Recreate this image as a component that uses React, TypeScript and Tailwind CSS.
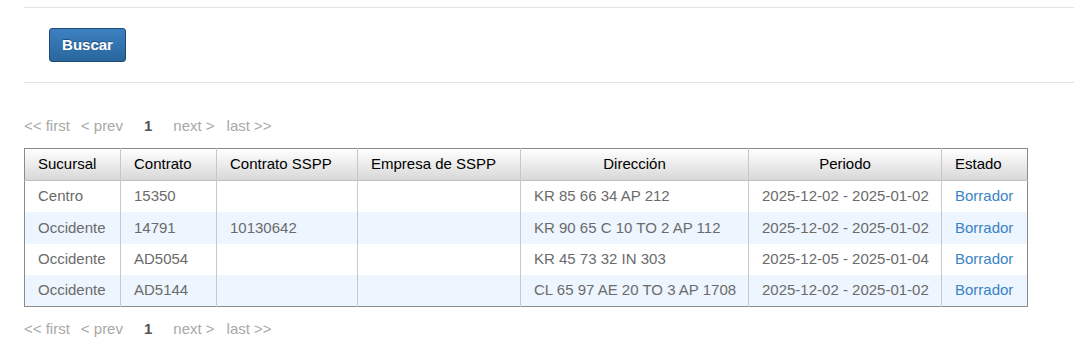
import React from "react";

type Row = {
  sucursal: string;
  contrato: string;
  sspp: string;
  empresa: string;
  direccion: string;
  periodo: string;
  estado: string;
};

const rows: Row[] = [
  { sucursal: "Centro", contrato: "15350", sspp: "", empresa: "", direccion: "KR 85 66 34 AP 212", periodo: "2025-12-02 - 2025-01-02", estado: "Borrador" },
  { sucursal: "Occidente", contrato: "14791", sspp: "10130642", empresa: "", direccion: "KR 90 65 C 10 TO 2 AP 112", periodo: "2025-12-02 - 2025-01-02", estado: "Borrador" },
  { sucursal: "Occidente", contrato: "AD5054", sspp: "", empresa: "", direccion: "KR 45 73 32 IN 303", periodo: "2025-12-05 - 2025-01-04", estado: "Borrador" },
  { sucursal: "Occidente", contrato: "AD5144", sspp: "", empresa: "", direccion: "CL 65 97 AE 20 TO 3 AP 1708", periodo: "2025-12-02 - 2025-01-02", estado: "Borrador" },
];

function Pager() {
  return (
    <div className="flex items-center h-4 text-[15px] leading-4 text-[#a8a8a8]">
      <span>&lt;&lt; first</span>
      <span className="ml-[11px]">&lt; prev</span>
      <span className="ml-[21px] font-bold text-[#555]">1</span>
      <span className="ml-[21px]">next &gt;</span>
      <span className="ml-[12px]">last &gt;&gt;</span>
    </div>
  );
}

const th = "h-[32px] px-[13px] font-normal text-black border-l border-[#c8c8c8] first:border-l-0";
const td = "h-[31.5px] px-[13px] border-l border-[#c8c8c8] first:border-l-0 whitespace-nowrap";

export default function App() {
  return (
    <div
      className="bg-white w-[1074px] h-[358px] overflow-hidden pl-[24px]"
      style={{ fontFamily: '"Liberation Sans", Arial, sans-serif' }}
    >
      <div className="pt-[7px]">
        <div className="border-t border-[#e3e3e3]" />
      </div>
      <div className="pt-[20px] pb-[20px] pl-[25px]">
        <button className="h-[34px] w-[77px] rounded-[3px] border border-[#1d4a72] bg-gradient-to-b from-[#3d80c2] to-[#29669d] text-white text-[15px] font-bold [text-shadow:0_-1px_0_rgba(0,0,0,0.35)]">
          Buscar
        </button>
      </div>
      <div className="border-t border-[#e3e3e3]" />
      <div className="pt-[35px]">
        <Pager />
      </div>
      <div className="pt-[14px]">
        <table className="table-fixed border-collapse w-[1003px] text-[15px] text-[#6b6b6b] border border-[#8a8a8a]">
          <colgroup>
            <col className="w-[96px]" />
            <col className="w-[96px]" />
            <col className="w-[141px]" />
            <col className="w-[163px]" />
            <col className="w-[228px]" />
            <col className="w-[193px]" />
            <col className="w-[86px]" />
          </colgroup>
          <thead>
            <tr className="bg-gradient-to-b from-[#ffffff] to-[#d8d8d8] border-b border-[#c0c0c0]">
              <th className={`${th} text-left`}>Sucursal</th>
              <th className={`${th} text-left`}>Contrato</th>
              <th className={`${th} text-left`}>Contrato SSPP</th>
              <th className={`${th} text-left`}>Empresa de SSPP</th>
              <th className={`${th} text-center`}>Dirección</th>
              <th className={`${th} text-center`}>Periodo</th>
              <th className={`${th} text-left`}>Estado</th>
            </tr>
          </thead>
          <tbody>
            {rows.map((r, i) => (
              <tr key={i} className={i % 2 === 1 ? "bg-[#edf5fe]" : "bg-white"}>
                <td className={td}>{r.sucursal}</td>
                <td className={td}>{r.contrato}</td>
                <td className={td}>{r.sspp}</td>
                <td className={td}>{r.empresa}</td>
                <td className={td}>{r.direccion}</td>
                <td className={td}>{r.periodo}</td>
                <td className={`${td} text-[#3a83c4]`}>{r.estado}</td>
              </tr>
            ))}
          </tbody>
        </table>
      </div>
      <div className="pt-[14px]">
        <Pager />
      </div>
    </div>
  );
}
